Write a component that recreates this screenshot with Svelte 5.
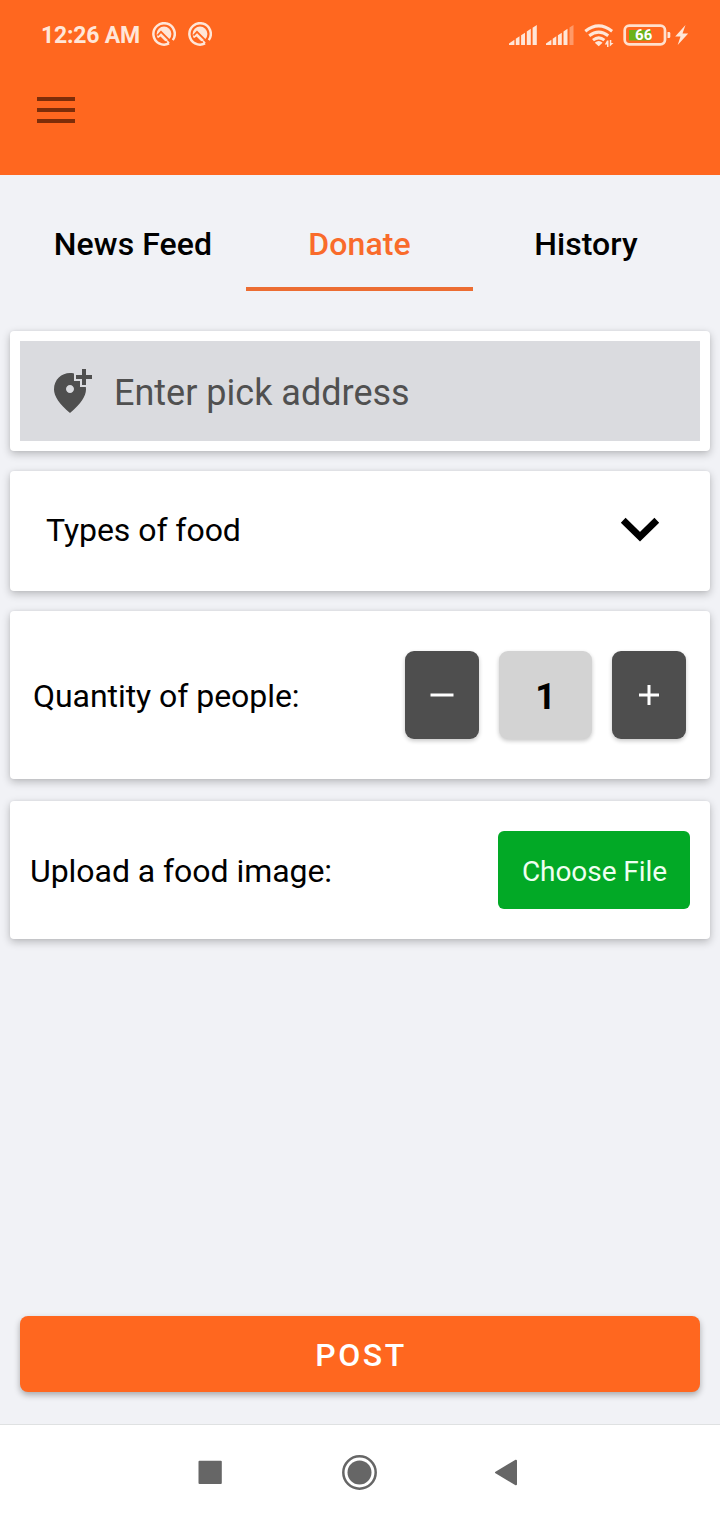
<script>
  let quantity = $state(1);
  const tabs = [
    { label: 'News Feed', width: 226 },
    { label: 'Donate', width: 227 },
    { label: 'History', width: 226 }
  ];
  let active = $state('Donate');
</script>

<div class="screen">
  <header>
    <div class="status">
      <span class="time">12:26 AM</span>
      {#each [0, 1] as i (i)}
        <svg class="notif" width="24" height="24" viewBox="0 0 24 24">
          <path d="M17 21.400A10.700 10.700 0 1 1 20.800 18.100" fill="none" stroke="#ffe6d8" stroke-width="2.500" />
          <path d="m17 21.400-1.800-2.400" stroke="#ffe6d8" stroke-width="1.800" />
          <circle cx="12" cy="12" r="7.400" fill="#ffe6d8" />
          <path d="M5.500 13.500 9 9.800 19 19.800" fill="none" stroke="#ff671f" stroke-width="1.800" />
          <path d="m5.500 16.500 3-2 5.500 5.500H7z" fill="#ff671f" />
        </svg>
      {/each}
      <svg class="signals" width="210" height="50" viewBox="490 10 210 50">
        <g fill="#ffe6d8">
          <path d="M509 45v-1.500l5.400-3.700V45zM515.800 45v-6.200l3.700-2.500V45zM521.100 45v-9.700l3.900-2.600V45zM526.800 45V31.500l4-2.700V45zM532.600 45V27.700l4.200-2.700v20z" />
          <path d="M546 45v-1.500l5.400-3.700V45zM552.700 45v-6.200l3.600-2.500V45zM557.900 45v-9.700l3.900-2.600V45zM563.500 45V31.500l4-2.700V45z" />
          <path d="M569.500 45V27.400l4-2.400v20z" opacity=".4" />
          <path d="M594.800 42.700q3.900-3.200 7.800 0L598.700 46.200z" />
          <path d="M607 40.500h1.500V47H607v-2.500h-2.200zM609.800 40h1.500v3h2.200l-3.700 3.500z" />
          <path d="M667.500 32h1.500q1.300 0 1.300 1.300v3.500q0 1.200-1.300 1.200h-1.500z" />
          <path d="m685.500 25-10.300 11.500h5.300L677.700 45l10.500-11.500h-5.700z" />
        </g>
        <g fill="none" stroke="#ffe6d8" stroke-width="3">
          <path d="M585.300 31.200q13.400-10.600 26.800 0" />
          <path d="M589.200 35.800q9.500-7.400 19 0" />
          <path d="M593 40.200q5.700-4.600 11.400 0" />
        </g>
        <rect x="624.700" y="25.700" width="40.300" height="18.600" rx="4.500" fill="none" stroke="#ffe0ce" stroke-width="2.700" />
        <rect x="629" y="30" width="22" height="10.500" fill="#6cb31a" />
        <text x="643.800" y="40.300" text-anchor="middle">66</text>
      </svg>
    </div>
    <button class="menu" aria-label="Menu"><i></i><i></i><i></i></button>
  </header>

  <nav class="tabs">
    {#each tabs as tab (tab.label)}
      <button class="tab" class:active={active === tab.label} style:width="{tab.width}px" onclick={() => (active = tab.label)}>
        {tab.label}
      </button>
    {/each}
  </nav>

  <main>
    <section class="card address">
      <div class="field">
        <svg width="48" height="48" viewBox="0 0 24 24" fill="#4f4f4f">
          <path d="M20 1v3h3v2h-3v3h-2V6h-3V4h3V1h2zm-8 12c1.100 0 2-.9 2-2s-.9-2-2-2-2 .9-2 2 .9 2 2 2zm2-9.750V7h3v3h2.920c.05.390.08.790.08 1.200 0 3.320-2.670 7.250-8 11.800-5.330-4.550-8-8.480-8-11.800C4 6.220 7.800 3 12 3c.68 0 1.350.08 2 .25z" />
        </svg>
        <span>Enter pick address</span>
      </div>
    </section>

    <section class="card types">
      <span>Types of food</span>
      <svg width="40" height="26" viewBox="0 0 40 26"><path d="M3.200 2.500 20 18.900 36.800 2.500" transform="translate(0 .8)" fill="none" stroke="#000" stroke-width="6.800" /></svg>
    </section>

    <section class="card quantity">
      <span>Quantity of people:</span>
      <div class="stepper">
        <button class="step" aria-label="Decrease" onclick={() => (quantity = Math.max(1, quantity - 1))}>
          <svg width="24" height="24" viewBox="0 0 24 24"><path d="M.5 12h23" stroke="#fff" stroke-width="3" /></svg>
        </button>
        <output>{quantity}</output>
        <button class="step" aria-label="Increase" onclick={() => (quantity += 1)}>
          <svg width="24" height="24" viewBox="0 0 24 24"><path d="M2 12h20M12 2v20" stroke="#fff" stroke-width="3" /></svg>
        </button>
      </div>
    </section>

    <section class="card upload">
      <span>Upload a food image:</span>
      <button class="choose">Choose File</button>
    </section>

    <button class="post">POST</button>
  </main>

  <footer>
    <svg width="24" height="24" viewBox="0 0 24 24"><rect x=".5" y=".7" width="23.300" height="23.300" rx="1" fill="#666" /></svg>
    <svg class="home" width="36" height="36" viewBox="0 0 36 36"><circle cx="17.500" cy="18.500" r="16.200" fill="none" stroke="#666" stroke-width="2.500" /><circle cx="17.500" cy="18.500" r="12" fill="#666" /></svg>
    <svg width="24" height="28" viewBox="0 0 24 28"><path d="M2 14.500 22 2.700v23.600z" fill="#666" stroke="#666" stroke-width="2" stroke-linejoin="round" /></svg>
  </footer>
</div>

<style>
  :global(body) {
    margin: 0;
    background: #f1f2f6;
  }
  * {
    box-sizing: border-box;
  }
  button {
    border: 0;
    padding: 0;
    font: inherit;
    color: inherit;
    background: none;
  }
  svg {
    display: block;
    flex: none;
  }
  .screen {
    width: 720px;
    height: 1520px;
    display: flex;
    flex-direction: column;
    overflow: hidden;
    background: #f1f2f6;
    color: #000;
    font-family: Roboto, sans-serif;
  }
  header {
    height: 175px;
    flex: none;
    background: #ff671f;
  }
  .status {
    height: 70px;
    display: flex;
    align-items: center;
    padding: 0 20px 0 41px;
  }
  .time {
    width: 111px;
    color: #ffe6d8;
    font-size: 23px;
    font-weight: 700;
    letter-spacing: -0.2px;
    white-space: nowrap;
  }
  .notif {
    margin-right: 12px;
    margin-top: -2px;
  }
  .signals {
    margin-left: auto;
  }
  .signals text {
    fill: #fff;
    font-size: 15px;
    font-weight: 700;
    letter-spacing: 0.3px;
  }
  .menu {
    display: flex;
    flex-direction: column;
    gap: 7px;
    margin: 27px 0 0 37px;
  }
  .menu i {
    width: 38px;
    height: 4px;
    background: #7d2d09;
  }
  .tabs {
    height: 116px;
    flex: none;
    display: flex;
    padding: 0 20px;
  }
  .tab {
    height: 116px;
    padding-top: 26px;
    border-bottom: 4px solid transparent;
    font-size: 32px;
    font-weight: 500;
    letter-spacing: 0.08px;
    white-space: nowrap;
  }
  .tab.active {
    color: #f96b2b;
    border-color: #ec6d32;
  }
  main {
    height: 1133px;
    flex: none;
    padding: 40px 10px 0;
    display: flex;
    flex-direction: column;
  }
  .card {
    display: flex;
    align-items: center;
    justify-content: space-between;
    flex: none;
    border-radius: 4px;
    background: #fff;
    box-shadow: 0 3px 9px rgba(0, 0, 0, 0.24), 0 0 3px rgba(0, 0, 0, 0.06);
    font-size: 32px;
    letter-spacing: -0.05px;
    white-space: nowrap;
  }
  .address {
    height: 120px;
    padding: 10px;
    margin-bottom: 20px;
  }
  .field {
    width: 100%;
    height: 100px;
    display: flex;
    align-items: center;
    gap: 20px;
    padding-left: 26px;
    background: #dadbdf;
    color: #505050;
    font-size: 36px;
    letter-spacing: 0;
  }
  .field svg {
    margin-top: -1px;
  }
  .field span {
    padding-top: 3px;
  }
  .types {
    height: 120px;
    padding: 0 50px 2px 36px;
    margin-bottom: 20px;
  }
  .quantity {
    height: 168px;
    padding: 0 24px 0 23px;
    margin-bottom: 22px;
  }
  .quantity > span,
  .upload > span {
    padding-top: 2px;
  }
  .stepper {
    display: flex;
    gap: 20px;
  }
  .step,
  output {
    width: 74px;
    height: 88px;
    display: flex;
    align-items: center;
    justify-content: center;
    border-radius: 9px;
    background: #4e4e4e;
    box-shadow: 0 2px 4px rgba(0, 0, 0, 0.22);
  }
  output {
    width: 93px;
    padding-top: 4px;
    background: #d3d3d3;
    font-size: 36px;
    font-weight: 700;
  }
  .upload {
    height: 138px;
    padding: 0 20px;
  }
  .choose {
    width: 192px;
    height: 78px;
    padding: 2px 0 0 1px;
    border-radius: 6px;
    background: #02a926;
    color: #effff1;
    font-size: 28px;
    letter-spacing: -0.05px;
  }
  .post {
    height: 76px;
    flex: none;
    margin: auto 10px 32px;
    padding: 2px 0 0 2px;
    border-radius: 8px;
    background: #ff671f;
    box-shadow: 0 3px 6px rgba(0, 0, 0, 0.3);
    color: #fff;
    font-size: 32px;
    font-weight: 500;
    letter-spacing: 2.6px;
  }
  footer {
    height: 96px;
    flex: none;
    display: flex;
    align-items: center;
    justify-content: space-between;
    padding: 0 202px 1px 198px;
    border-top: 1px solid #dfe1e2;
    background: #fff;
  }
  .home {
    margin-left: 3px;
  }
</style>
